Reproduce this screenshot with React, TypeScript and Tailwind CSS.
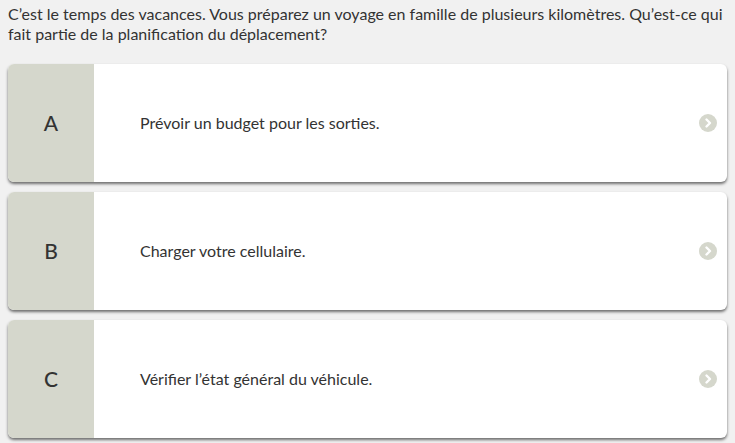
const options = [
  { letter: 'A', text: 'Prévoir un budget pour les sorties.' },
  { letter: 'B', text: 'Charger votre cellulaire.' },
  { letter: 'C', text: 'Vérifier l’état général du véhicule.' },
];

function ChevronCircle() {
  return (
    <svg width="18" height="18" viewBox="0 0 18 18" aria-hidden="true">
      <circle cx="9" cy="9" r="9" fill="#d5d7cc" />
      <path d="M7.5 5.5 L11 9 L7.5 12.5" fill="none" stroke="#fff" strokeWidth="2.4" strokeLinecap="round" strokeLinejoin="round" />
    </svg>
  );
}

export default function App() {
  return (
    <div className="min-h-[443px] w-[735px] bg-[#f1f1f1] px-2 pt-[4px] font-['Lato','Open_Sans',sans-serif] text-[#333]">
      <p className="text-[16px] leading-[20px]">
        C’est le temps des vacances. Vous préparez un voyage en famille de plusieurs kilomètres. Qu’est-ce qui fait partie de la planification du déplacement?
      </p>

      <div className="mt-[20px] flex flex-col gap-[10px]">
        {options.map((o) => (
          <button
            key={o.letter}
            type="button"
            className="flex h-[118px] w-full overflow-hidden rounded-[6px] bg-white text-left shadow-[0_2px_3px_rgba(0,0,0,0.55)]"
          >
            <div className="flex w-[86px] shrink-0 items-center justify-center bg-[#d5d7cc] text-[21px] font-medium text-[#333]">
              {o.letter}
            </div>
            <div className="flex flex-1 items-center pl-[46px] text-[16px]">{o.text}</div>
            <div className="flex items-center pr-[10px]">
              <ChevronCircle />
            </div>
          </button>
        ))}
      </div>
    </div>
  );
}
